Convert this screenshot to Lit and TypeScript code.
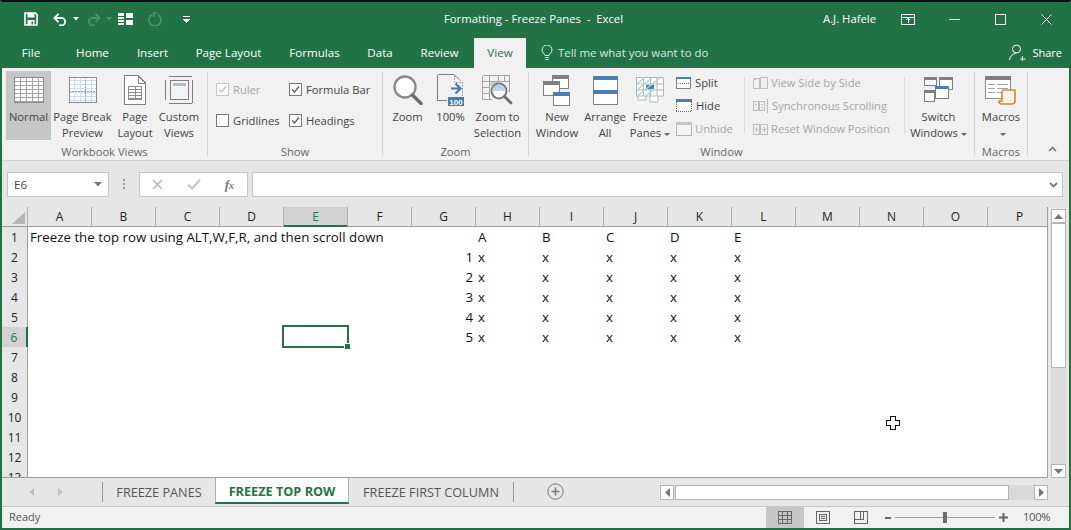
import { LitElement, html, css, svg } from "lit";
import { customElement } from "lit/decorators.js";

const G = "#7f7f7f", B = "#4a7eb5";
const s = (w: number, h: number, body: unknown) =>
  html`<svg width=${w} height=${h} viewBox="0 0 ${w} ${h}" fill="none" shape-rendering="crispEdges">${body}</svg>`;
const range = (a: number, b: number, st = 1) => { const r: number[] = []; for (let i = a; i <= b; i += st) r.push(i); return r; };
const ln = (x1: number, y1: number, x2: number, y2: number, c: string, w = 1, dash = "") =>
  svg`<line x1=${x1} y1=${y1} x2=${x2} y2=${y2} stroke=${c} stroke-width=${w} stroke-dasharray=${dash}/>`;
const rc = (x: number, y: number, w: number, h: number, st: string, fill = "#fff") =>
  svg`<rect x=${x + .5} y=${y + .5} width=${w - 1} height=${h - 1} stroke=${st} fill=${fill}/>`;
const fl = (x: number, y: number, w: number, h: number, c: string) => svg`<rect x=${x} y=${y} width=${w} height=${h} fill=${c}/>`;

const icons: Record<string, unknown> = {
  normal: s(30, 26, svg`${fl(0, 0, 30, 26, "#fff")}${range(0, 25, 4).map(y => ln(0, y + .5, 30, y + .5, "#a3a3a3"))}${[0, 6, 12, 18, 24, 29].map(x => ln(x + .5, 0, x + .5, 26, "#a3a3a3"))}${rc(0, 0, 30, 26, "#8c8c8c", "none")}`),
  pagebreak: s(28, 26, svg`${fl(0, 0, 28, 26, "#fff")}${range(3, 25, 4).map(y => ln(0, y + .5, 28, y + .5, "#cfdcea"))}${[5, 11, 22].map(x => ln(x + .5, 0, x + .5, 26, "#cfdcea"))}${ln(0, 14.5, 28, 14.5, "#7da3c9", 1, "2 1")}${ln(16.5, 0, 16.5, 26, "#7da3c9", 1, "2 1")}${rc(0, 0, 28, 26, "#8c8c8c", "none")}`),
  pagelayout: s(22, 30, svg`<path d="M.5.5H14L21.5 8V29.5H.5Z" stroke="#7f7f7f" fill="#fff"/><path d="M14 .5V8H21.5" stroke="#7f7f7f"/>${rc(4, 11, 14, 14, "#8c8c8c")}${[14, 17, 20, 23].map(y => ln(4, y + .5, 18, y + .5, "#8c8c8c"))}${ln(11.5, 11, 11.5, 25, "#8c8c8c")}`),
  custom: s(28, 28, svg`${ln(.5, 4, .5, 24, G)}${ln(4, .5, 27, .5, G)}${rc(5, 4, 19, 20, "#7f7f7f", "#f4f4f4")}${fl(8, 7, 13, 3, "#a9bedb")}${ln(27.5, 4, 27.5, 27, G)}${ln(4, 27.5, 27, 27.5, G)}`),
  zoom: html`<svg width="30" height="30" viewBox="0 0 30 30" fill="none"><circle cx="12" cy="12" r="10.5" stroke="#8a8a8a" stroke-width="2.4" fill="#fff"/><path d="M19.5 20 28 28.5" stroke="#6d6d6d" stroke-width="3.4" stroke-linecap="round"/></svg>`,
  zoom100: html`<svg width="27" height="32" viewBox="0 0 27 32" fill="none"><path d="M.5.5H17M.5.5V26.500H10" stroke="#7f7f7f" shape-rendering="crispEdges"/><path d="M17.500 .5V8H25.500V22M18 1.500 25 8" stroke="#a5a5a5" stroke-dasharray="2 1" shape-rendering="crispEdges"/><path d="M14 14.500H23M18.500 9.500l5 5-5 5" stroke="#3f7fbd" stroke-width="2.200"/><rect x="11" y="23" width="16" height="9" fill="#3f7fbd"/><text x="19" y="30.500" text-anchor="middle" font-family="Liberation Sans, sans-serif" font-size="8" font-weight="700" fill="#fff">100</text></svg>`,
  zoomsel: html`<svg width="31" height="30" viewBox="0 0 31 30" fill="none"><path d="M.5.5H27.5V17M.5.5V24.5H10M.5 6.5H27.5M.5 12.5H8M.5 18.5H8M7.5.5V24.5M16.5.5V6M22.5.5V6" stroke="#a5a5a5" shape-rendering="crispEdges"/><rect x="8" y="7" width="8" height="4" fill="#cfcfcf"/><circle cx="17" cy="16" r="7.5" stroke="#7a7a7a" stroke-width="2" fill="#fff"/><path d="M10.5 16a6.5 6.5 0 0 1 13 0Z" fill="#bcd3ea"/><path d="M22.5 21.5 29 28" stroke="#6d6d6d" stroke-width="2.8" stroke-linecap="round"/></svg>`,
  newwin: s(28, 31, svg`${rc(9, 0, 17, 14, "#7f7f7f")}${fl(9, 0, 17, 4, "#808080")}${rc(0, 6, 17, 15, "#7f7f7f")}${fl(0, 6, 17, 4, "#808080")}${rc(10, 17, 17, 14, "#7f7f7f")}${fl(10, 17, 17, 4, B)}`),
  arrange: s(25, 29, svg`${rc(0, 0, 25, 29, "#7f7f7f")}${fl(0, 0, 25, 4, B)}${fl(0, 14, 25, 4, B)}`),
  freeze: html`<svg width="28" height="26" viewBox="0 0 28 26" fill="none"><path d="M.5.5H27.5V19H.5ZM2 19v4h8v-4M14 19v6h8v-6" stroke="#aeb8bf" fill="#fff"/><path d="M.5 7H27.5M.5 13H27.5M7.5.5V19M14.5.5V19M21 .5V19" stroke="#b5b5b5"/><rect x="10" y="8" width="8" height="4" fill="#4a7eb5"/><path d="M1 7 8 1M1 13 16 1M1 19 24 1M10 19 17 13" stroke="#a5d6d8" stroke-width="1.4"/></svg>`,
  split: s(15, 12, svg`${rc(0, 0, 15, 12, "#7f7f7f")}${fl(0, 0, 15, 2, B)}${ln(2, 6.5, 14, 6.5, B, 1, "1 1")}`),
  hide: s(16, 13, svg`${fl(0, 0, 16, 3, B)}${fl(0, 3, 16, 10, "#fff")}${ln(0, 12.5, 16, 12.5, "#666", 1, "1 1")}${ln(.5, 3, .5, 13, "#666", 1, "1 1")}${ln(15.5, 3, 15.5, 13, "#666", 1, "1 1")}`),
  unhide: s(16, 14, svg`${rc(0, 0, 16, 14, "#b5b5b5", "#f4f4f4")}${fl(0, 0, 16, 3, "#c4c4c4")}`),
  side: s(15, 12, svg`${rc(0, 1, 7, 11, "#bdbdbd", "none")}${rc(7, 0, 8, 12, "#bdbdbd", "none")}${fl(0, 1, 4, 2, "#c9c9c9")}`),
  sync: s(16, 14, svg`${rc(0, 2, 6, 10, "#bdbdbd", "none")}${rc(6, 2, 6, 10, "#bdbdbd", "none")}${ln(2, 5.5, 4, 5.5, "#bdbdbd")}${ln(8, 5.5, 10, 5.5, "#bdbdbd")}${ln(8, 8.5, 10, 8.5, "#bdbdbd")}${ln(14.5, 0, 14.5, 14, "#bdbdbd")}`),
  reset: s(15, 12, svg`${rc(0, 1, 7, 11, "#bdbdbd", "none")}${rc(7, 1, 8, 11, "#bdbdbd", "none")}${ln(2, 6.5, 5, 6.5, "#bdbdbd")}${ln(9, 6.5, 13, 6.5, "#bdbdbd")}${ln(3.5, 4, 3.5, 9, "#bdbdbd")}${ln(11.5, 4, 11.5, 9, "#bdbdbd")}`),
  switchw: s(29, 26, svg`${rc(0, 0, 13, 9, "#7f7f7f")}${fl(0, 0, 13, 3, "#808080")}${rc(15, 0, 14, 13, "#7f7f7f")}${fl(15, 0, 14, 3, "#808080")}${rc(0, 13, 11, 12, "#7f7f7f")}${fl(0, 13, 11, 3, "#808080")}${rc(11, 9, 14, 13, "#7f7f7f", "#fff")}${fl(11, 9, 14, 3, B)}`),
  macros: html`<svg width="32" height="29" viewBox="0 0 32 29" fill="none"><rect x=".5" y=".5" width="25" height="22" stroke="#8a8a8a" fill="#fff"/><rect width="26" height="4" fill="#7f7f7f"/><path d="M3 8.5H10M12 8.5H23M3 12.5H10M12 12.5H23M3 16.5H10M12 16.5H18" stroke="#a5a5a5"/><path d="M18 14h12v11a3 3 0 0 1-3 3H17a3 3 0 0 1-3-3h3v-8a3 3 0 0 1 1-3Z" stroke="#d18a32" stroke-width="1.6" fill="#fbf3e4"/></svg>`,
};

const tabs = [["Home", 33], ["Insert", 29], ["Page Layout", 65], ["Formulas", 49], ["Data", 24], ["Review", 37]] as const;
const colLetters = "ABCDEFGHIJKLMNOP".split("");
const data: Record<string, string[]> = {
  G: ["", "1", "2", "3", "4", "5"],
  H: ["A", "x", "x", "x", "x", "x"], I: ["B", "x", "x", "x", "x", "x"], J: ["C", "x", "x", "x", "x", "x"],
  K: ["D", "x", "x", "x", "x", "x"], L: ["E", "x", "x", "x", "x", "x"],
};

@customElement("app-root")
export class AppRoot extends LitElement {
  static styles = css`
    :host { display: block; width: 1071px; height: 530px; overflow: hidden; font-family: "Open Sans", "Noto Sans", sans-serif; font-size: 11.2px; color: #444; }
    .app { width: 1071px; height: 530px; box-sizing: border-box; border-top: 2px solid #0b0b0b; border-left: 2px solid #217346; border-right: 2px solid #217346; border-bottom: 2px solid #217346; background: #e6e6e6; display: flex; flex-direction: column; position: relative; }
    svg { display: block; }

    .title { height: 34px; background: #217346; display: grid; grid-template-columns: 1fr auto 1fr; align-items: center; color: #fff; flex: none; }
    .qat { display: flex; align-items: center; padding-left: 22px; }
    .title-text { font-size: 11.3px; white-space: pre; margin-top: -2px; margin-left: -4px; }
    .winbar { display: flex; justify-content: flex-end; align-items: center; }
    .user { font-size: 11.3px; margin-right: 25px; margin-top: -2px; }

    .tabs { height: 32px; background: #217346; display: flex; align-items: flex-end; color: #fff; flex: none; position: relative; font-size: 11.6px; }
    .tab { height: 30px; display: flex; justify-content: center; align-items: center; flex: none; white-space: nowrap; box-sizing: border-box; padding-bottom: 2px; }
    .tab.file { width: 36px; margin-left: 11px; margin-right: 27px; }
    .tab.plain { margin-right: 29px; }
    .tab.view { width: 52px; background: #f1f1f1; color: #217346; margin-left: -13px; margin-right: 15px; }
    .tell { display: flex; align-items: center; gap: 5px; height: 30px; color: #dbe9e1; padding-bottom: 2px; box-sizing: border-box; white-space: nowrap; font-size: 11.45px; }
    .share { margin-left: auto; margin-right: 7px; display: flex; align-items: center; gap: 6px; height: 30px; padding-bottom: 2px; box-sizing: border-box; font-size: 11px; }

    .ribbon { height: 93px; box-sizing: border-box; background: #f1f1f1; border-bottom: 1px solid #d4d4d4; display: flex; flex: none; }
    .group { display: flex; flex-direction: column; box-sizing: border-box; border-right: 1px solid #d3d3d3; height: 84px; margin-top: 4px; flex: none; position: relative; }
    .group.last { border: none; flex: 1; }
    .gbody { display: flex; height: 70px; margin-top: -1px; flex: none; }
    .glabel { text-align: center; color: #666; font-size: 11.2px; line-height: 15px; margin-top: 3px; white-space: nowrap; flex: none; }
    .big { display: flex; flex-direction: column; align-items: center; flex: none; height: 69px; box-sizing: border-box; text-align: center; line-height: 16px; white-space: nowrap; }
    .big.active { background: #c6c6c6; }
    .slot { height: 38px; display: flex; align-items: center; justify-content: center; flex: none; }
    .caret { display: inline-block; width: 0; height: 0; border: 3px solid transparent; border-top: 3px solid #666; border-bottom: 0; vertical-align: middle; margin-left: 3px; }

    .checks { display: grid; grid-template-columns: 73px auto; grid-auto-rows: 31px; padding: 3px 0 0 8px; }
    .chk { display: flex; align-items: center; gap: 4px; white-space: nowrap; }
    .chk.dim { color: #a6a6a6; }
    .box { width: 13px; height: 13px; box-sizing: border-box; border: 1px solid #777; background: #fff; display: flex; flex: none; }
    .chk.dim .box { border-color: #c6c6c6; }
    .smalls { display: flex; flex-direction: column; flex: none; box-sizing: border-box; }
    .small { height: 23px; display: flex; align-items: center; gap: 3px; white-space: nowrap; }
    .small.tight { gap: 4px; }
    .small.dim { color: #a6a6a6; }
    .vsep { width: 1px; height: 56px; margin-top: 6px; background: #dadada; flex: none; }
    .chev { position: absolute; right: 12px; bottom: 4px; }
    .win-label { margin-right: 30px; margin-left: -30px; }

    .fbar { height: 25px; margin-top: 11px; display: flex; align-items: stretch; flex: none; padding-left: 5px; }
    .fbox { background: #fff; border: 1px solid #c6c6c6; box-sizing: border-box; display: flex; align-items: center; }
    .name { width: 102px; padding: 0 6px; justify-content: space-between; font-size: 11.5px; }
    .dots { width: 30px; display: flex; justify-content: center; align-items: center; }
    .btns { width: 109px; justify-content: space-between; padding: 0 13px 0 12px; }
    .fx { font-family: "Liberation Serif", serif; font-style: italic; font-weight: 700; font-size: 13px; color: #777; }
    .fx span { font-size: 10px; }
    .input { width: 811px; margin-left: 4px; justify-content: flex-end; padding-right: 4px; }

    .sheet { height: 271px; margin-top: 10px; display: flex; flex: none; }
    .gridwrap { width: 1046px; overflow: hidden; position: relative; flex: none; border-bottom: 1px solid #9e9e9e; border-right: 1px solid #9e9e9e; box-sizing: border-box; }
    .grid { display: grid; grid-template-columns: 26px repeat(16, 64px); grid-template-rows: 20px repeat(13, 20px); background: #fff; }
    .corner { background: #e6e6e6; border-right: 1px solid #b0b0b0; border-bottom: 1px solid #9e9e9e; box-sizing: border-box; position: relative; }
    .tri { position: absolute; left: 10px; top: 5px; width: 0; height: 0; border-left: 13px solid transparent; border-bottom: 12px solid #b5b5b5; }
    .ch { background: #e6e6e6; border-right: 1px solid #b0b0b0; border-bottom: 1px solid #9e9e9e; box-sizing: border-box; text-align: center; line-height: 19px; font-size: 12px; color: #222; }
    .ch.sel { background: #d2d2d2; border-bottom: 2px solid #217346; color: #217346; }
    .rh { background: #e6e6e6; border-right: 1px solid #9e9e9e; box-sizing: border-box; text-align: center; line-height: 21px; font-size: 12px; color: #222; }
    .rh.sel { background: #d2d2d2; border-right: 2px solid #217346; color: #217346; }
    .c { font-size: 13.3px; line-height: 21px; color: #111; padding-left: 2px; white-space: nowrap; min-width: 0; }
    .c.r { text-align: right; padding: 0 3px 0 0; }
    .cursor { position: absolute; left: 280px; top: 118px; width: 67px; height: 23px; box-sizing: border-box; border: 2px solid #217346; pointer-events: none; }
    .handle { position: absolute; right: -3px; bottom: -3px; width: 5px; height: 5px; background: #217346; border: 1px solid #fff; box-sizing: content-box; margin: -1px; }

    .vscroll { width: 15px; margin: 2px 0 0 3px; display: flex; flex-direction: column; background: #dcdcdc; height: 269px; flex: none; }
    .sbtn { background: #fff; border: 1px solid #b6b6b6; box-sizing: border-box; display: flex; align-items: center; justify-content: center; flex: none; }
    .vthumb { background: #fff; border: 1px solid #b6b6b6; box-sizing: border-box; height: 145px; flex: none; }
    .vscroll .sbtn { height: 14px; }
    .spacer { flex: 1; }

    .bottom { height: 28px; display: flex; flex: none; align-items: stretch; font-size: 12.7px; }
    .nav { width: 101px; display: flex; align-items: center; padding-left: 27px; gap: 24px; box-sizing: border-box; flex: none; border-right: 1px solid #999; height: 20px; margin-top: 4px; }
    .stab { display: flex; align-items: center; justify-content: center; color: #555; height: 26px; padding-top: 1px; box-sizing: border-box; flex: none; white-space: nowrap; }
    .stab.on { color: #217346; font-weight: 700; background: #fff; border: 1px solid #b0b0b0; border-top: none; border-bottom: 2px solid #217346; }
    .stab-end { width: 1px; height: 20px; margin-top: 4px; background: #999; flex: none; }
    .add { margin-left: 33px; margin-top: 5px; flex: none; }
    .hscroll { margin-left: 96px; margin-top: 7px; width: 388px; height: 15px; display: flex; background: #d9d9d9; flex: none; }
    .hscroll .sbtn { width: 14px; }
    .hthumb { width: 334px; background: #fff; border: 1px solid #b6b6b6; box-sizing: border-box; margin-left: 1px; }

    .status { height: 21px; background: #f1f1f1; border-top: 1px solid #c6c6c6; display: flex; align-items: center; flex: none; position: relative; }
    .ready { margin-left: 7px; margin-top: -2px; color: #555; font-size: 11px; }
    .sright { margin-left: auto; display: flex; align-items: center; height: 100%; }
    .vb { width: 38px; height: 100%; display: flex; align-items: center; justify-content: center; flex: none; }
    .vb.on { background: #c6c6c6; }
    .minus { margin-left: 5px; }
    .slider { width: 100px; height: 1px; background: #a0a0a0; position: relative; margin: 0 4px; }
    .knob { position: absolute; left: 48px; top: -5px; width: 4px; height: 11px; background: #6d6d6d; }
    .pct { width: 61px; padding-left: 15px; margin-top: -2px; box-sizing: border-box; color: #555; letter-spacing: -.3px; }
    .pointer { position: absolute; left: 883px; top: 413px; }
  `;

  big(icon: string, l1: string, l2: string, w: number, active = false, caret = false) {
    return html`<div class="big ${active ? "active" : ""}" style="width:${w}px">
      <div class="slot">${icons[icon]}</div>
      <div>${l1}</div><div>${l2}${caret ? html`<span class="caret"></span>` : ""}</div>
    </div>`;
  }
  chk(label: string, on: boolean, dim = false) {
    const c = dim ? "#bdbdbd" : "#555";
    return html`<div class="chk ${dim ? "dim" : ""}"><span class="box">${on ? html`<svg width="11" height="11" viewBox="0 0 11 11" fill="none"><path d="M2 5.5 4.5 8 9 2.5" stroke=${c} stroke-width="1.2"/></svg>` : ""}</span>${label}</div>`;
  }
  small(icon: string, label: string, dim = false) {
    return html`<div class="small ${dim ? "dim" : "tight"}">${icons[icon]}<span>${label}</span></div>`;
  }

  render() {
    const qatCaret = (c: string, ml: number) => html`<svg style="margin-left:${ml}px" width="6" height="4" viewBox="0 0 6 4"><path d="M0 0h6L3 3.5Z" fill=${c}/></svg>`;
    return html`<div class="app">
      <div class="title">
        <div class="qat">
          <svg width="14" height="14" viewBox="0 0 14 14" fill="none"><path d="M1 1H11.5L13 2.5V13H1Z" stroke="#fff" stroke-width="1.6"/><rect x="3.5" y="1" width="7" height="4.5" fill="#fff"/><rect x="3.5" y="8" width="7" height="5" fill="#fff"/><rect x="7.5" y="9.5" width="1.5" height="3" fill="#217346"/></svg>
          <svg style="margin-left:15px" width="15" height="13" viewBox="0 0 15 13" fill="none"><path d="M1.5 5H9.5a4 4 0 0 1 0 7.5H6" stroke="#fff" stroke-width="1.8"/><path d="M5.5 .8 1.4 5l4.1 4.2" stroke="#fff" stroke-width="1.8"/></svg>
          ${qatCaret("#fff", 5)}
          <svg style="margin-left:7px" width="15" height="13" viewBox="0 0 15 13" fill="none"><path d="M13.5 5H5.5a4 4 0 0 0 0 7.5H9" stroke="#4c9169" stroke-width="1.8"/><path d="M9.5 .8 13.6 5 9.5 9.2" stroke="#4c9169" stroke-width="1.8"/></svg>
          ${qatCaret("#4c9169", 5)}
          <svg style="margin-left:6px" width="15" height="12" viewBox="0 0 15 12" fill="#fff" shape-rendering="crispEdges"><path d="M0 0h6v2.5H0ZM0 3.5h6v2H0ZM0 6.5h6v2H0ZM0 9.5h6V12H0ZM8 0h7v5H8ZM8 7h7v5H8Z"/></svg>
          <svg style="margin-left:15px" width="14" height="14" viewBox="0 0 14 14" fill="none"><path d="M9.5 2.5a6 6 0 1 1-5 0" stroke="#4c9169" stroke-width="1.8"/><path d="M9 .5H6V5" stroke="#4c9169" stroke-width="1.8"/></svg>
          <svg style="margin-left:21px" width="7" height="8" viewBox="0 0 7 8" shape-rendering="crispEdges"><path d="M0 1h7v1H0Z" fill="#fff"/><path d="M0 4h7L3.5 8Z" fill="#fff"/></svg>
        </div>
        <div class="title-text">Formatting - Freeze Panes  -  Excel</div>
        <div class="winbar">
          <span class="user">A.J. Hafele</span>
          <svg width="14" height="11" viewBox="0 0 14 11" fill="none" shape-rendering="crispEdges"><path d="M.5.5h13v10H.5ZM.5 3h13M7 9V4M5 6l2-2 2 2" stroke="#fff"/></svg>
          <svg style="margin-left:34px" width="11" height="1" viewBox="0 0 11 1"><rect width="11" height="1" fill="#fff"/></svg>
          <svg style="margin-left:35px" width="11" height="11" viewBox="0 0 11 11" fill="none" shape-rendering="crispEdges"><rect x=".5" y=".5" width="10" height="10" stroke="#fff"/></svg>
          <svg style="margin-left:35px;margin-right:17px" width="11" height="11" viewBox="0 0 11 11" fill="none"><path d="M.5.5l10 10M10.5.5l-10 10" stroke="#fff"/></svg>
        </div>
      </div>

      <div class="tabs">
        <div class="tab file">File</div>
        ${tabs.map(t => html`<div class="tab plain" style="width:${t[1]}px">${t[0]}</div>`)}
        <div class="tab view">View</div>
        <div class="tell">
          <svg width="12" height="15" viewBox="0 0 12 15" fill="none"><path d="M4 10.5C3.5 8.5 1 7.5 1 5a5 5 0 0 1 10 0c0 2.5-2.5 3.500-3 5.500ZM4 12.500h4M4.500 14.500h3" stroke="#e6f0ea"/></svg>
          <span>Tell me what you want to do</span>
        </div>
        <div class="share">
          <svg width="17" height="17" viewBox="0 0 17 17" fill="none"><circle cx="7.500" cy="5" r="4" stroke="#fff"/><path d="M.5 16c.5-4 3-6 6-6.500M11 15h5.500M13.500 12v5.500" stroke="#fff"/></svg>
          <span>Share</span>
        </div>
      </div>

      <div class="ribbon">
        <div class="group" style="width:206px">
          <div class="gbody" style="padding-left:4px">
            ${this.big("normal", "Normal", "", 45, true)}
            <div style="width:2px"></div>
            ${this.big("pagebreak", "Page Break", "Preview", 59)}
            <div style="width:2px"></div>
            ${this.big("pagelayout", "Page", "Layout", 42)}
            <div style="width:1px"></div>
            ${this.big("custom", "Custom", "Views", 44)}
          </div>
          <div class="glabel">Workbook Views</div>
        </div>
        <div class="group" style="width:175px">
          <div class="gbody"><div class="checks">
            ${this.chk("Ruler", true, true)}${this.chk("Formula Bar", true)}
            ${this.chk("Gridlines", false)}${this.chk("Headings", true)}
          </div></div>
          <div class="glabel">Show</div>
        </div>
        <div class="group" style="width:146px">
          <div class="gbody">
            ${this.big("zoom", "Zoom", "", 49)}
            ${this.big("zoom100", "100%", "", 37)}
            ${this.big("zoomsel", "Zoom to", "Selection", 57)}
          </div>
          <div class="glabel">Zoom</div>
        </div>
        <div class="group" style="width:446px">
          <div class="gbody" style="padding-left:3px">
            ${this.big("newwin", "New", "Window", 50)}
            ${this.big("arrange", "Arrange", "All", 46)}
            ${this.big("freeze", "Freeze", "Panes", 44, false, true)}
            <div class="smalls" style="width:72px;padding-left:4px">
              ${this.small("split", "Split")}${this.small("hide", "Hide")}${this.small("unhide", "Unhide", true)}
            </div>
            <div class="vsep"></div>
            <div class="smalls" style="width:159px;padding-left:8px">
              ${this.small("side", "View Side by Side", true)}${this.small("sync", "Synchronous Scrolling", true)}${this.small("reset", "Reset Window Position", true)}
            </div>
            <div class="vsep"></div>
            ${this.big("switchw", "Switch", "Windows", 67, false, true)}
          </div>
          <div class="glabel win-label">Window</div>
        </div>
        <div class="group" style="width:53px">
          <div class="gbody">
            <div class="big" style="width:52px">
              <div class="slot">${icons.macros}</div>
              <div>Macros</div><div><span class="caret"></span></div>
            </div>
          </div>
          <div class="glabel">Macros</div>
        </div>
        <div class="group last">
          <svg class="chev" width="9" height="6" viewBox="0 0 9 6" fill="none"><path d="M1 5l3.500-3.500L8 5" stroke="#666" stroke-width="1.400"/></svg>
        </div>
      </div>

      <div class="fbar">
        <div class="fbox name"><span>E6</span><svg width="8" height="5" viewBox="0 0 8 5"><path d="M0 0h8L4 4.500Z" fill="#777"/></svg></div>
        <div class="dots"><svg width="3" height="11" viewBox="0 0 3 11" fill="#999"><rect y="0" width="2" height="2"/><rect y="4" width="2" height="2"/><rect y="8" width="2" height="2"/></svg></div>
        <div class="fbox btns">
          <svg width="11" height="11" viewBox="0 0 11 11" fill="none"><path d="M1 1l9 9M10 1l-9 9" stroke="#c4c4c4" stroke-width="1.800"/></svg>
          <svg width="14" height="11" viewBox="0 0 14 11" fill="none"><path d="M1 5.500l4 4L13 1" stroke="#c4c4c4" stroke-width="2"/></svg>
          <span class="fx">f<span>x</span></span>
        </div>
        <div class="fbox input"><svg width="9" height="6" viewBox="0 0 9 6" fill="none"><path d="M1 1l3.500 3.500L8 1" stroke="#777" stroke-width="1.800"/></svg></div>
      </div>

      <div class="sheet">
        <div class="gridwrap">
          <div class="grid">
            <div class="corner"><span class="tri"></span></div>
            ${colLetters.map(c => html`<div class="ch ${c === "E" ? "sel" : ""}">${c}</div>`)}
            ${range(1, 13).map(r => html`
              <div class="rh ${r === 6 ? "sel" : ""}">${r}</div>
              ${colLetters.map(c => {
                if (r === 1 && c === "A") return html`<div class="c">Freeze the top row using ALT,W,F,R, and then scroll down</div>`;
                const v = r <= 6 && data[c] ? data[c][r - 1] : "";
                return html`<div class="c ${c === "G" ? "r" : ""}">${v}</div>`;
              })}`)}
          </div>
          <div class="cursor"><span class="handle"></span></div>
        </div>
        <div class="vscroll">
          <div class="sbtn"><svg width="9" height="5" viewBox="0 0 9 5"><path d="M0 5h9L4.500 0Z" fill="#777"/></svg></div>
          <div class="vthumb"></div>
          <div class="spacer"></div>
          <div class="sbtn"><svg width="9" height="5" viewBox="0 0 9 5"><path d="M0 0h9L4.500 5Z" fill="#777"/></svg></div>
        </div>
      </div>

      <div class="bottom">
        <div class="nav">
          <svg width="5" height="8" viewBox="0 0 5 8"><path d="M5 0v8L0 4Z" fill="#c0c0c0"/></svg>
          <svg width="5" height="8" viewBox="0 0 5 8"><path d="M0 0v8l5-4Z" fill="#c0c0c0"/></svg>
        </div>
        <div class="stab" style="width:112px">FREEZE PANES</div>
        <div class="stab on" style="width:134px">FREEZE TOP ROW</div>
        <div class="stab" style="width:164px">FREEZE FIRST COLUMN</div>
        <div class="stab-end"></div>
        <svg class="add" width="17" height="17" viewBox="0 0 17 17" fill="none"><circle cx="8.500" cy="8.500" r="7.700" stroke="#777"/><path d="M4.500 8.500h8M8.500 4.500v8" stroke="#777" stroke-width="1.500"/></svg>
        <div class="hscroll">
          <div class="sbtn"><svg width="5" height="9" viewBox="0 0 5 9"><path d="M5 0v9L0 4.500Z" fill="#777"/></svg></div>
          <div class="hthumb"></div>
          <div class="spacer"></div>
          <div class="sbtn"><svg width="5" height="9" viewBox="0 0 5 9"><path d="M0 0v9l5-4.500Z" fill="#777"/></svg></div>
        </div>
      </div>

      <div class="status">
        <span class="ready">Ready</span>
        <div class="sright">
          <div class="vb on"><svg width="14" height="13" viewBox="0 0 14 13" fill="none" shape-rendering="crispEdges"><path d="M.5.5h13v12H.5ZM.5 4.500h13M.5 8.500h13M4.500.5v12M9.500.5v12" stroke="#666"/></svg></div>
          <div class="vb"><svg width="14" height="13" viewBox="0 0 14 13" fill="none" shape-rendering="crispEdges"><path d="M.5.5h13v12H.5ZM3.500 3.500h7v6h-7ZM5 5.500h4M5 7.500h4" stroke="#666"/></svg></div>
          <div class="vb"><svg width="14" height="13" viewBox="0 0 14 13" fill="none" shape-rendering="crispEdges"><path d="M.5.5h13v12H.5ZM6.500.5v8H.5M6.500 8.500h3V.5" stroke="#666"/></svg></div>
          <svg class="minus" width="6" height="2" viewBox="0 0 6 2"><rect width="6" height="2" fill="#666"/></svg>
          <div class="slider"><span class="knob"></span></div>
          <svg width="9" height="9" viewBox="0 0 9 9" fill="#666"><rect y="3.500" width="9" height="2"/><rect x="3.500" width="2" height="9"/></svg>
          <span class="pct">100%</span>
        </div>
      </div>

      <svg class="pointer" width="17" height="17" viewBox="0 0 17 17" fill="#fff" stroke="#111" shape-rendering="crispEdges"><path d="M5.500 1.500h5v4h4v5h-4v4h-5v-4h-4v-5h4Z"/></svg>
    </div>`;
  }
}
